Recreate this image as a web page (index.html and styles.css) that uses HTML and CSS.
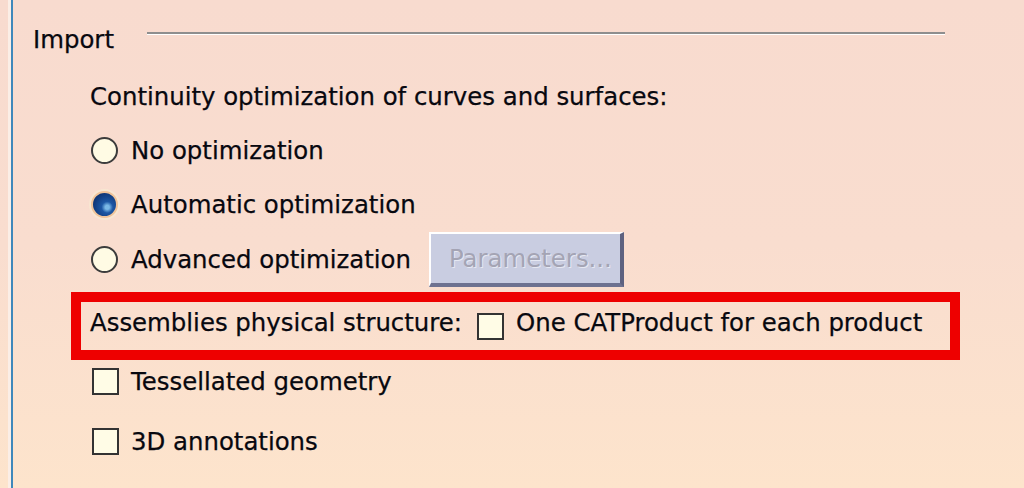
FILE: index.html
```html
<!DOCTYPE html>
<html>
<head>
<meta charset="utf-8">
<link rel="stylesheet" href="styles.css">
</head>
<body>
<div class="screen">
  <div class="panel">
    <div class="row header">
      <span class="title">Import</span>
      <span class="sep"></span>
    </div>
    <div class="row sub r2"><span>Continuity optimization of curves and surfaces:</span></div>
    <div class="row sub r3"><span class="radio"></span><span class="lbl">No optimization</span></div>
    <div class="row sub r4"><span class="radio on"></span><span class="lbl">Automatic optimization</span></div>
    <div class="row sub r5"><span class="radio"></span><span class="lbl">Advanced optimization</span><span class="btn">Parameters...</span></div>
    <div class="redbox">
      <span>Assemblies physical structure:</span>
      <span class="check inbox"></span>
      <span class="lbl">One CATProduct for each product</span>
    </div>
    <div class="row sub r7"><span class="check"></span><span class="lbl">Tessellated geometry</span></div>
    <div class="row sub r8"><span class="check"></span><span class="lbl">3D annotations</span></div>
  </div>
</div>
</body>
</html>
```
FILE: styles.css
```css
html, body {
  margin: 0;
  padding: 0;
}
body {
  width: 1024px;
  height: 488px;
  overflow: hidden;
  font-family: "DejaVu Sans", Verdana, sans-serif;
  font-size: 24.4px;
  color: #08080f;
  -webkit-text-stroke: 0.25px #08080f;
}
.screen {
  height: 488px;
  background: linear-gradient(180deg, #f8dbcf 0%, #f9ddcf 50%, #fde4cc 100%);
  padding-left: 11px;
  box-sizing: border-box;
}
.panel {
  height: 488px;
  border-left: 2px solid #3f88bb;
  box-shadow: -3px 0 0 0 #fbeee6;
  box-sizing: border-box;
  padding-top: 19px;
}
.row {
  display: flex;
  align-items: center;
  height: 40px;
}
.header {
  padding-left: 20px;
}
.title {
  width: 114px;
}
.sep {
  width: 798px;
  height: 2px;
  background: #8e8e8e;
  border-bottom: 1px solid #ffffff;
  margin-top: -11px;
}
.sub {
  padding-left: 77px;
}
.r2 { margin-top: 17px; }
.r3 { margin-top: 14px; }
.r4 { margin-top: 14px; }
.r5 { margin-top: 7px; height: 56px; }
.r7 { margin-top: 1px; }
.r8 { margin-top: 20px; }
.radio {
  width: 23px;
  height: 23px;
  border: 2px solid #3c3c3c;
  border-radius: 50%;
  background: #fffbe4;
  margin-left: 1px;
  margin-right: 13px;
  flex: none;
}
.radio.on {
  border: 2px solid #f0c49a;
  background: radial-gradient(circle at 62% 62%, #79b8e6 0 10%, #1c57a4 28%, #0b2c6a 85%);
  box-shadow: 0 0 0 2px #f8e6d2;
}
.lbl {
  white-space: nowrap;
}
.btn {
  margin-left: 18px;
  width: 195px;
  height: 55px;
  box-sizing: border-box;
  background: #c9cde1;
  border-top: 2px solid #ffffff;
  border-left: 2px solid #ffffff;
  border-right: 4px solid #5e6280;
  border-bottom: 4px solid #6e7290;
  color: #a4a4b4;
  -webkit-text-stroke: 0;
  text-shadow: 1px 1px 0 #e6e8f2;
  padding-left: 18px;
  display: flex;
  align-items: center;
}
.redbox {
  margin-top: 5px;
  margin-left: 58px;
  width: 889px;
  height: 68px;
  box-sizing: border-box;
  border: 10px solid #ee0000;
  display: flex;
  align-items: center;
  padding-left: 9px;
  padding-bottom: 7px;
  white-space: nowrap;
}
.check {
  width: 23px;
  height: 23px;
  border: 2px solid #333333;
  background: #fffce6;
  margin-left: 2px;
  margin-right: 12px;
  flex: none;
}
.check.inbox {
  margin-left: 15px;
  margin-top: 7px;
}
```
